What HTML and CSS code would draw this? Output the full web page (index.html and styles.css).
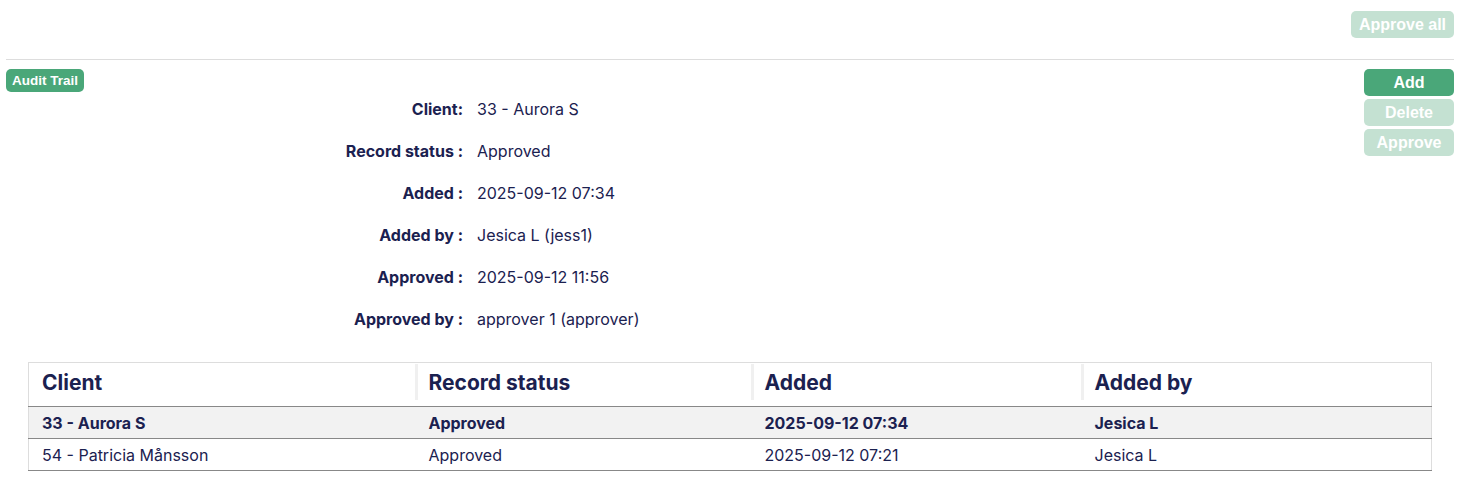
FILE: index.html
```html
<!DOCTYPE html>
<html lang="en">
<head>
    <meta charset="UTF-8">
    <title>Record</title>
    <link rel="stylesheet" href="styles.css">
</head>
<body>
    <div class="page">
        <div class="top-bar">
            <button class="btn btn-disabled btn-wide">Approve all</button>
        </div>

        <div class="record">
            <div class="record-main">
                <span class="badge">Audit Trail</span>
                <div class="details">
                    <div class="label">Client:</div>
                    <div class="value">33 - Aurora S</div>
                    <div class="label">Record status :</div>
                    <div class="value">Approved</div>
                    <div class="label">Added :</div>
                    <div class="value">2025-09-12 07:34</div>
                    <div class="label">Added by :</div>
                    <div class="value">Jesica L (jess1)</div>
                    <div class="label">Approved :</div>
                    <div class="value">2025-09-12 11:56</div>
                    <div class="label">Approved by :</div>
                    <div class="value">approver 1 (approver)</div>
                </div>
            </div>
            <div class="actions">
                <button class="btn">Add</button>
                <button class="btn btn-disabled">Delete</button>
                <button class="btn btn-disabled">Approve</button>
            </div>
        </div>

        <table class="history">
            <thead>
                <tr>
                    <th class="col-client">Client</th>
                    <th class="col-status">Record status</th>
                    <th class="col-added">Added</th>
                    <th>Added by</th>
                </tr>
            </thead>
            <tbody>
                <tr class="current">
                    <td>33 - Aurora S</td>
                    <td>Approved</td>
                    <td>2025-09-12 07:34</td>
                    <td>Jesica L</td>
                </tr>
                <tr>
                    <td>54 - Patricia Månsson</td>
                    <td>Approved</td>
                    <td>2025-09-12 07:21</td>
                    <td>Jesica L</td>
                </tr>
            </tbody>
        </table>
    </div>
</body>
</html>
```

FILE: styles.css
```css
* {
    margin: 0;
    padding: 0;
    box-sizing: border-box;
}

body {
    font-family: Inter, "Noto Sans", sans-serif;
    color: #1b2150;
    background-color: #ffffff;
}

.page {
    padding: 11px 9px 0 6px;
}

.top-bar {
    display: flex;
    justify-content: flex-end;
    padding-bottom: 21px;
    border-bottom: 1px solid #dddddd;
}

.btn {
    font-family: "Liberation Sans", Arial, sans-serif;
    font-weight: bold;
    font-size: 16px;
    color: #ffffff;
    background-color: #4aa779;
    border: none;
    border-radius: 5px;
    width: 90px;
    height: 27px;
    cursor: pointer;
}

.btn-disabled {
    background-color: #c4e1d2;
    cursor: default;
}

.btn-wide {
    width: 103px;
}

.record {
    display: flex;
    justify-content: space-between;
    padding-top: 9px;
}

.record-main {
    flex-grow: 1;
}

.badge {
    display: inline-block;
    font-family: "Liberation Sans", Arial, sans-serif;
    font-weight: bold;
    font-size: 13.5px;
    line-height: 23px;
    color: #ffffff;
    background-color: #4aa779;
    border-radius: 5px;
    padding: 0 6px;
    vertical-align: top;
}

.details {
    display: grid;
    grid-template-columns: 457px 1fr;
    column-gap: 14px;
    margin-top: 1px;
}

.label,
.value {
    height: 42px;
    line-height: 32px;
    font-size: 16px;
}

.label {
    font-weight: 700;
    text-align: right;
}

.actions {
    display: flex;
    flex-direction: column;
    gap: 3px;
}

.history {
    width: calc(100% - 44px);
    margin: 17px 22px 0;
    border-collapse: collapse;
    border-left: 1px solid #dddddd;
    border-right: 1px solid #dddddd;
    font-size: 16px;
}

.history th {
    position: relative;
    text-align: left;
    font-size: 21px;
    font-weight: 700;
    height: 44px;
    padding: 0 13px 4px;
    border-top: 1px solid #dddddd;
    border-bottom: 1px solid #888888;
}

/* light divider between header cells, stops short of the bottom rule */
.history th + th::before {
    content: "";
    position: absolute;
    left: -1px;
    top: 1px;
    bottom: 6px;
    width: 3px;
    background-color: #f0f0f0;
}

.history .col-client {
    width: 387px;
}

.history .col-status {
    width: 336px;
}

.history .col-added {
    width: 330px;
}

.history td {
    height: 32px;
    padding: 0 13px;
    border-bottom: 1px solid #888888;
}

.history .current td {
    background-color: #f2f2f2;
    font-weight: 700;
}
```
